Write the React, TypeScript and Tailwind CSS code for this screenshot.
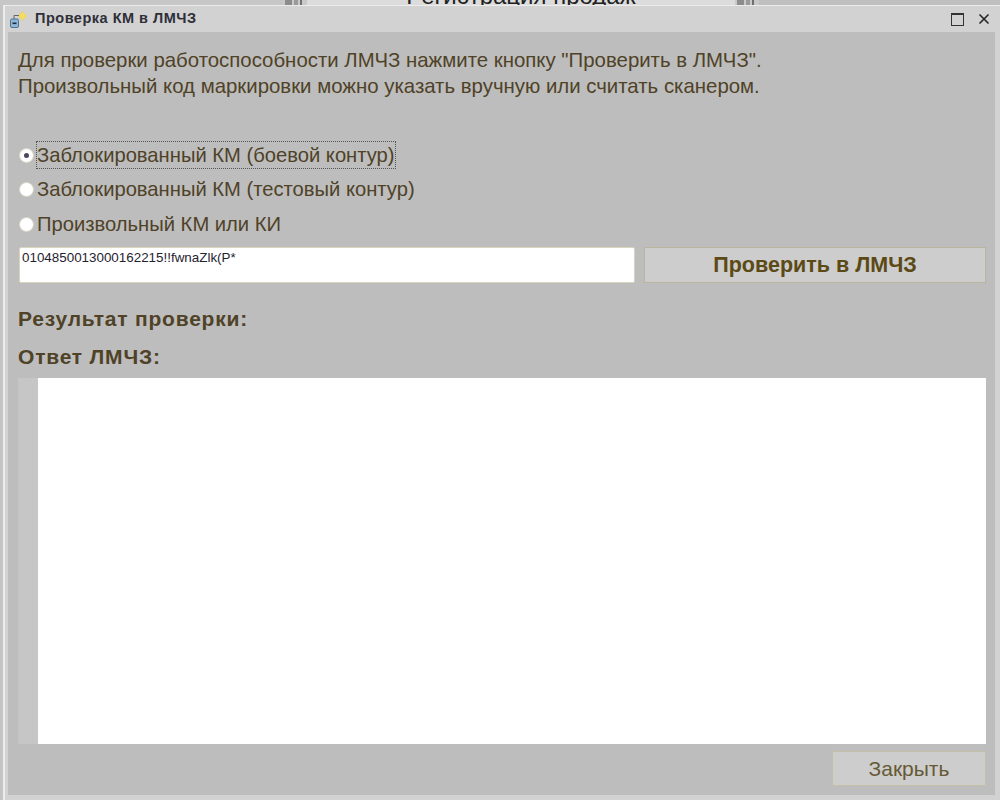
import { X } from "lucide-react";

const textColor = "text-[#4f4227]";

const RadioRow = ({ label, checked }: { label: string; checked?: boolean }) => (
  <div className="flex h-[26px] items-center">
    <span className="ml-[1px] flex h-[15px] w-[15px] shrink-0 items-center justify-center rounded-full border border-[#d8d4c4] bg-white">
      {checked && <span className="h-[5px] w-[5px] rounded-full bg-[#4a4a58]" />}
    </span>
    <span
      className={`ml-[2px] flex h-[28px] items-center whitespace-nowrap border border-dotted text-[20.2px] ${textColor} ${
        checked ? "border-[#55554f]" : "border-transparent"
      }`}
    >
      {label}
    </span>
  </div>
);

const ScrollBits = () => (
  <div className="flex h-[5px] w-[24px] shrink-0 gap-[2px] bg-[#c9c9c9] px-[2px]">
    <span className="w-[7px] bg-[#8c8c8c]" />
    <span className="w-[4px] bg-[#9a9a9a]" />
    <span className="w-[2px] bg-[#6f6f6f]" />
  </div>
);

export default function App() {
  return (
    <div className="flex h-[800px] w-[1000px] flex-col overflow-hidden bg-[#c4c4c4] font-['Liberation_Sans',sans-serif]">
      {/* Window behind the dialog */}
      <div className="flex h-[5px] shrink-0 overflow-hidden bg-[#c6c6c6]">
        <div className="w-[283px] shrink-0" />
        <ScrollBits />
        <div className="flex h-[5px] w-[428px] shrink-0 justify-center overflow-hidden bg-[#dcdcdc]">
          <span className="-mt-[16px] text-[24px] leading-[24px] text-[#222]">Регистрация продаж</span>
        </div>
        <ScrollBits />
        <div className="flex-1 bg-[#bfbfbf]" />
      </div>

      {/* Dialog */}
      <div className="ml-[3px] flex min-h-0 flex-1 flex-col border-l-[2px] border-t-[1px] border-[#ececec] bg-[#d2d2d2] pb-[5px] pl-[3px] pr-[5px]">
        <div className="flex h-[26px] shrink-0 items-center pl-[2px] pr-[1px]">
          <svg width="22" height="22" viewBox="0 0 22 22" className="shrink-0">
            <path d="M12.5 3.5 L17 8 L12.5 12.5 L8 8 Z" fill="#f4dc62" stroke="#d8c878" strokeWidth="0.6" />
            <path d="M4 11 V7.5 H9" stroke="#666" strokeWidth="1" fill="none" />
            <rect x="0.5" y="11" width="8" height="8.5" rx="1.5" fill="#8fb6d6" stroke="#4d7391" />
            <rect x="2.5" y="14.5" width="4" height="1.6" fill="#1d2c3c" />
          </svg>
          <span className="ml-[3px] text-[14.5px] font-bold tracking-[0.5px] text-[#2f2f38]">Проверка КМ в ЛМЧЗ</span>
          <div className="ml-auto flex items-center gap-[12px]">
            <span className="h-[13px] w-[13px] border-[1.5px] border-t-[2px] border-[#333]" />
            <X size={16} strokeWidth={2.6} className="mr-[2px] text-[#2a2a2a]" />
          </div>
        </div>

        <div className="flex min-h-0 flex-1 flex-col bg-[#bdbdbd] pl-[10px] pr-[9px]">
          <p className={`mt-[15px] whitespace-nowrap text-[20.4px] leading-[26px] ${textColor}`}>
            Для проверки работоспособности ЛМЧЗ нажмите кнопку "Проверить в ЛМЧЗ".
            <br />
            Произвольный код маркировки можно указать вручную или считать сканером.
          </p>

          <div className="mt-[43px] flex flex-col gap-[8.5px]">
            <RadioRow label="Заблокированный КМ (боевой контур)" checked />
            <RadioRow label="Заблокированный КМ (тестовый контур)" />
            <RadioRow label="Произвольный КМ или КИ" />
          </div>

          <div className="mt-[10px] flex gap-[9px]">
            <div className="ml-[1px] h-[36px] w-[616px] rounded-[2px] border border-[#d9d5bd] bg-white pl-[2px] pt-[1px] text-[13.4px] leading-[17px] text-[#1f2330]">
              0104850013000162215!!fwnaZlk(P*
            </div>
            <div className="flex h-[36px] flex-1 items-center justify-center border border-[#b9b59e] bg-[#cdcdcd] text-[21.5px] font-bold text-[#5c4a16]">
              Проверить в ЛМЧЗ
            </div>
          </div>

          <div className={`mt-[24px] text-[21px] font-bold leading-[24px] tracking-[0.8px] ${textColor}`}>Результат проверки:</div>
          <div className={`mt-[14px] text-[21px] font-bold leading-[24px] tracking-[0.8px] ${textColor}`}>Ответ ЛМЧЗ:</div>

          <div className="mt-[9px] flex h-[366px] shrink-0">
            <div className="w-[20px] bg-[#c6c6c6]" />
            <div className="flex-1 bg-white" />
          </div>

          <div className="mt-[7px] flex justify-end">
            <div className="flex h-[35px] w-[154px] items-center justify-center border border-[#c4c0a8] bg-[#cdcdcd] text-[21px] text-[#665a36]">
              Закрыть
            </div>
          </div>
        </div>
      </div>
    </div>
  );
}
